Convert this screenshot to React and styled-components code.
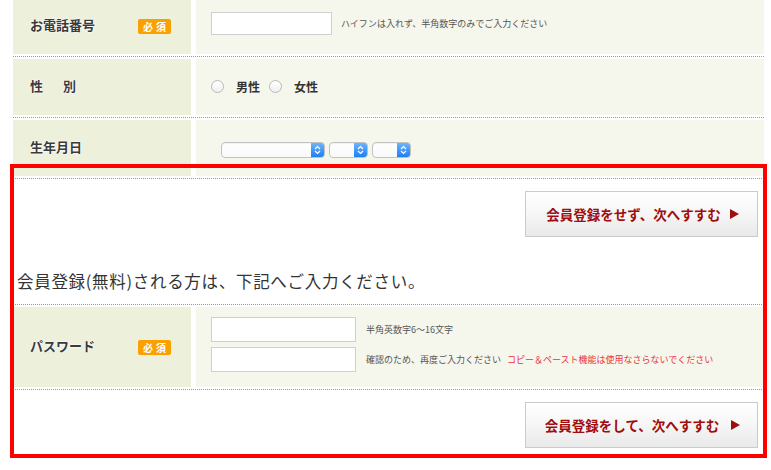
import React from 'react';
import styled, { createGlobalStyle } from 'styled-components';

const GlobalStyle = createGlobalStyle`
  html, body {
    margin: 0;
    padding: 0;
    background: #fff;
  }
  body {
    font-family: "Noto Sans CJK JP", "Noto Sans", sans-serif;
    color: #333;
    overflow: hidden;
  }
`;

const Page = styled.div`
  position: relative;
  width: 771px;
  height: 470px;
  overflow: hidden;
`;

const Form = styled.div`
  width: 751px;
  margin: -4px 0 0 13px;
`;

const Row = styled.div`
  display: flex;
  gap: 5px;
  padding: 2px 0;
  height: ${props => props.h}px;
  border-bottom: 1px dotted #9a9a9a;
`;

const LabelCell = styled.div`
  width: 178px;
  box-sizing: border-box;
  background: #edf0db;
  display: flex;
  align-items: center;
  justify-content: space-between;
  padding: 0 20px 0 17px;
`;

const LabelText = styled.span`
  font-size: 13px;
  font-weight: bold;
  color: #3a3a3a;
  margin-bottom: 4px;
  letter-spacing: ${props => props.spread || 0}px;
  text-shadow: 0 0 2px #fff, 0 0 2px #fff, 0 0 1px #fff;
`;

const Badge = styled.span`
  width: 33px;
  height: 15px;
  border-radius: 2px;
  background: #faa000;
  color: #fff;
  font-size: 10px;
  font-weight: bold;
  letter-spacing: 3px;
  display: flex;
  align-items: center;
  justify-content: center;
  padding-left: 3px;
  box-sizing: border-box;
`;

const ValueCell = styled.div`
  flex: 1;
  background: #f6f7ec;
  display: flex;
  align-items: ${props => props.top ? 'flex-start' : 'center'};
  padding: 0 0 ${props => props.lift || 0}px 15px;
`;

const TextInput = styled.input`
  width: ${props => props.w}px;
  height: ${props => props.h}px;
  box-sizing: border-box;
  border: 1px solid #cfcfcf;
  background: #fff;
  margin: 0;
  padding: 0 4px;
  &:focus {
    outline: 0;
  }
`;

const Hint = styled.span`
  font-size: 9px;
  color: #555;
  margin-left: ${props => props.gap || 10}px;
  white-space: nowrap;
`;

const Warn = styled.span`
  color: #e8333c;
  margin-left: 6px;
`;

const Stack = styled.div`
  display: flex;
  flex-direction: column;
  gap: 5px;
  margin-top: 10px;
`;

const Line = styled.div`
  display: flex;
  align-items: center;
`;

const Radio = styled.input`
  appearance: none;
  width: 13px;
  height: 13px;
  margin: 0;
  border-radius: 50%;
  border: 1px solid #b8b8b8;
  background: linear-gradient(#fff, #f0f0f0);
  box-sizing: border-box;
`;

const RadioLabel = styled.label`
  display: flex;
  align-items: center;
  gap: 12px;
  font-size: 12px;
  font-weight: bold;
  color: #333;
  margin-right: 9px;
`;

const Selects = styled.div`
  display: flex;
  gap: 4px;
  margin: 4px 0 0 10px;
`;

const SelectBox = styled.div`
  width: ${props => props.w}px;
  height: 16px;
  box-sizing: border-box;
  border: 1px solid #c2c2c2;
  border-radius: 4px;
  background: linear-gradient(#fff, #f9f9f9);
  box-shadow: inset 0 1px 1px rgba(0, 0, 0, 0.06);
  display: flex;
  justify-content: flex-end;
  overflow: hidden;
`;

const SelectCap = styled.div`
  width: 13px;
  height: 100%;
  background: linear-gradient(#6db4fb, #1d7ff6);
  display: flex;
  align-items: center;
  justify-content: center;
`;

const Actions = styled.div`
  display: flex;
  justify-content: flex-end;
  padding: 12px 6px 0 0;
`;

const NextButton = styled.button`
  width: 233px;
  height: 46px;
  box-sizing: border-box;
  border: 1px solid #cbcbcb;
  background: linear-gradient(#ffffff 0%, #f7f7f7 45%, #e9e9e9 100%);
  color: #a00d0d;
  font-family: "Noto Sans CJK JP", sans-serif;
  font-size: 13.5px;
  font-weight: bold;
  display: flex;
  align-items: center;
  justify-content: center;
  padding: 0 0 0 2px;
  cursor: pointer;
  &:focus {
    outline: 0;
  }
`;

const Arrow = styled.span`
  width: 0;
  height: 0;
  border-left: 9px solid #a00d0d;
  border-top: 5px solid transparent;
  border-bottom: 5px solid transparent;
  margin-left: ${props => props.gap}px;
`;

const Lead = styled.div`
  font-size: 16.5px;
  line-height: 24px;
  color: #333;
  padding: 32px 0 11px 4px;
  border-bottom: 1px dotted #9a9a9a;
  letter-spacing: 0.7px;
`;

const Frame = styled.div`
  position: absolute;
  left: 10px;
  top: 164px;
  width: 757px;
  height: 294px;
  box-sizing: border-box;
  border: 4px solid #ff0000;
  pointer-events: none;
`;

const Chevrons = () => (
  <svg width="7" height="10" viewBox="0 0 7 10">
    <path d="M1 4 L3.5 1.5 L6 4 M1 6 L3.5 8.5 L6 6" fill="none" stroke="#fff" strokeWidth="1.2" />
  </svg>
);

const Select = ({ w }) => (
  <SelectBox w={w}>
    <SelectCap>
      <Chevrons />
    </SelectCap>
  </SelectBox>
);

const App = () => (
  <Page>
    <GlobalStyle />
    <Form>
      <Row h={56}>
        <LabelCell>
          <LabelText>お電話番号</LabelText>
          <Badge>必須</Badge>
        </LabelCell>
        <ValueCell lift={5}>
          <TextInput type="text" w={121} h={23} />
          <Hint gap={9}>ハイフンは入れず、半角数字のみでご入力ください</Hint>
        </ValueCell>
      </Row>
      <Row h={56}>
        <LabelCell>
          <LabelText spread={3.5}>性　別</LabelText>
        </LabelCell>
        <ValueCell lift={2}>
          <RadioLabel><Radio type="radio" name="sex" />男性</RadioLabel>
          <RadioLabel><Radio type="radio" name="sex" />女性</RadioLabel>
        </ValueCell>
      </Row>
      <Row h={56}>
        <LabelCell>
          <LabelText>生年月日</LabelText>
        </LabelCell>
        <ValueCell>
          <Selects>
            <Select w={104} />
            <Select w={39} />
            <Select w={39} />
          </Selects>
        </ValueCell>
      </Row>

      <Actions>
        <NextButton>会員登録をせず、次へすすむ<Arrow gap={9} /></NextButton>
      </Actions>

      <Lead>会員登録(無料)される方は、下記へご入力ください。</Lead>

      <Row h={80}>
        <LabelCell>
          <LabelText>パスワード</LabelText>
          <Badge>必須</Badge>
        </LabelCell>
        <ValueCell top>
          <Stack>
            <Line>
              <TextInput type="password" w={145} h={25} />
              <Hint>半角英数字6〜16文字</Hint>
            </Line>
            <Line>
              <TextInput type="password" w={145} h={25} />
              <Hint>確認のため、再度ご入力ください<Warn>コピー＆ペースト機能は使用なさらないでください</Warn></Hint>
            </Line>
          </Stack>
        </ValueCell>
      </Row>

      <Actions>
        <NextButton>会員登録をして、次へすすむ<Arrow gap={12} /></NextButton>
      </Actions>
    </Form>
    <Frame />
  </Page>
);

export default App;
